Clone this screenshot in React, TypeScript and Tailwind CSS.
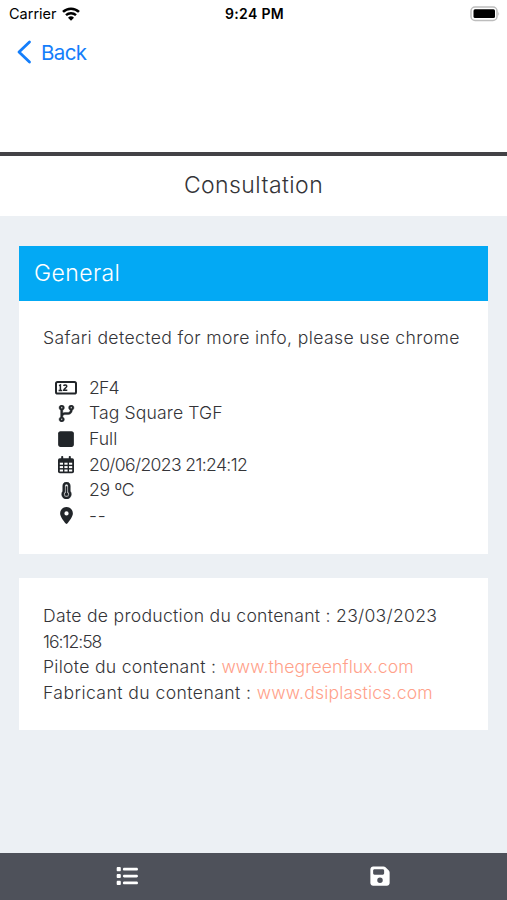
import React from "react";
import {
  FaCodeBranch,
  FaSquare,
  FaTemperatureThreeQuarters,
  FaLocationDot,
  FaList,
  FaFloppyDisk,
} from "react-icons/fa6";

const CounterIcon = () => (
  <svg width={22} height={14} viewBox="0 0 22 14" fill="none">
    <rect x="1" y="1" width="20" height="11.6" rx="1.6" stroke="#212529" strokeWidth="2" />
    <path
      d="M4 4.600l1.400-.7v5.500M3.600 9.400h3.600M8.600 4.900c.5-1.200 3.200-1.100 3.200.4 0 1.400-3 2.300-3.100 4h3.600"
      stroke="#212529"
      strokeWidth="1.500"
    />
  </svg>
);

const CalendarIcon = () => (
  <svg width={16} height={18} viewBox="0 0 16 18">
    <rect x="3.200" y="0" width="2" height="4" rx="0.800" fill="#212529" />
    <rect x="10.800" y="0" width="2" height="4" rx="0.800" fill="#212529" />
    <rect x="0" y="2.200" width="16" height="15" rx="1.800" fill="#212529" />
    {[6.7, 10.1, 13.5].map((y) =>
      [1.8, 6.4, 11].map((x) => (
        <rect key={`${x}-${y}`} x={x} y={y} width="3.200" height="2" fill="#fff" />
      ))
    )}
  </svg>
);

const WifiIcon = () => (
  <svg width={18} height={14} viewBox="0 0 18 14" fill="none">
    <path d="M1 4.900a11.600 11.600 0 0 1 16 0" stroke="#000" strokeWidth="2.600" />
    <path d="M4 8.200a7.200 7.200 0 0 1 10 0" stroke="#000" strokeWidth="2.400" />
    <path d="M9 13.700L6 10.700a4.400 4.400 0 0 1 6 0z" fill="#000" />
  </svg>
);

const details = [
  { icon: <CounterIcon />, text: "2F4", spacing: "tracking-[-0.8px]" },
  { icon: <FaCodeBranch size={17} stroke="currentColor" strokeWidth={12} />, text: "Tag Square TGF", spacing: "tracking-[0.12px]" },
  { icon: <FaSquare size={18} />, text: "Full", spacing: "tracking-[0px]" },
  { icon: <CalendarIcon />, text: "20/06/2023 21:24:12", spacing: "tracking-[-0.65px]" },
  { icon: <FaTemperatureThreeQuarters size={17} stroke="currentColor" strokeWidth={16} />, text: "29 ºC", spacing: "tracking-[-0.3px]" },
  { icon: <FaLocationDot size={17} />, text: "--", spacing: "tracking-[0.8px]" },
];

const StatusBar = () => (
  <div className="grid grid-cols-3 items-center h-7 pl-[9px] pr-[7px] text-black">
    <div className="flex items-center gap-[5px] text-[14.5px]">
      <span>Carrier</span>
      <WifiIcon />
    </div>
    <span className="pb-0.5 text-center text-[14px] font-semibold tracking-[0.35px]">9:24 PM</span>
    <div className="flex items-center justify-end">
      <svg width={30} height={16} viewBox="0 0 30 16">
        <rect x="1" y="1" width="26" height="13.400" rx="4" fill="#fff" stroke="#bdbdbd" strokeWidth="1.500" />
        <rect x="3.500" y="3.300" width="21.500" height="8.800" rx="1.500" fill="#000" />
        <path d="M28.300 5.500q1.700 2.200 0 4.400z" fill="#bdbdbd" />
      </svg>
    </div>
  </div>
);

const App = () => {
  return (
    <div className="flex flex-col w-full h-screen bg-[#ecf0f4] font-['Inter',sans-serif] overflow-hidden">
      {/* Header */}
      <header className="h-[156px] bg-white border-b-4 border-[#434246] shrink-0">
        <StatusBar />
        <button className="flex items-center gap-[9px] pl-[16px] h-12 text-[#147efb] text-[20.5px]">
          <svg width={16} height={24} viewBox="0 0 16 24" fill="none">
            <path d="M13.500 2L3 12l10.500 10" stroke="currentColor" strokeWidth="2.800" strokeLinecap="round" strokeLinejoin="round" />
          </svg>
          <span className="pt-0.5 tracking-[-0.6px]">Back</span>
        </button>
      </header>
      <h1 className="flex items-center justify-center h-[60px] pb-0.5 bg-white shrink-0 text-[23px] font-light tracking-[0.42px] text-[#343438]">
        Consultation
      </h1>

      {/* Content */}
      <main className="flex-1 flex flex-col gap-6 px-[19px] pt-[30px] text-[17.6px] leading-[25.700px] font-light text-[#343438]">
        <section className="h-[308px] bg-white">
          <h2 className="flex items-center h-[55px] px-[15px] bg-[#03a9f4] text-white text-[23px] tracking-[0.4px]">
            General
          </h2>
          <div className="px-6 pt-6">
            <p className="whitespace-nowrap tracking-[0.37px]">
              Safari detected for more info, please use chrome
            </p>
            <ul className="pt-6">
              {details.map((item) => (
                <li key={item.text} className="flex items-center h-[25.700px]">
                  <span className="flex justify-center w-[46px] text-[#212529]">{item.icon}</span>
                  <span className={item.spacing}>{item.text}</span>
                </li>
              ))}
            </ul>
          </div>
        </section>

        <section className="h-[152px] px-6 pt-[25px] bg-white tracking-[0.28px]">
          <p>
            Date de production du contenant : 23/03/2023
            <br />
            <span className="tracking-[-1px]">16:12:58</span>
          </p>
          <p>
            Pilote du contenant : <a className="tracking-[0.1px] text-[#ffa18a]">www.thegreenflux.com</a>
          </p>
          <p>
            <span className="tracking-[0.42px]">Fabricant du contenant : </span>
            <a className="tracking-[0.17px] text-[#ffa18a]">www.dsiplastics.com</a>
          </p>
        </section>
      </main>

      {/* Bottom bar */}
      <nav className="grid grid-cols-2 place-items-center h-[47px] pb-0.5 bg-[#4e515a] text-white shrink-0">
        <FaList size={22} />
        <FaFloppyDisk size={22} />
      </nav>
    </div>
  );
};

export default App;
